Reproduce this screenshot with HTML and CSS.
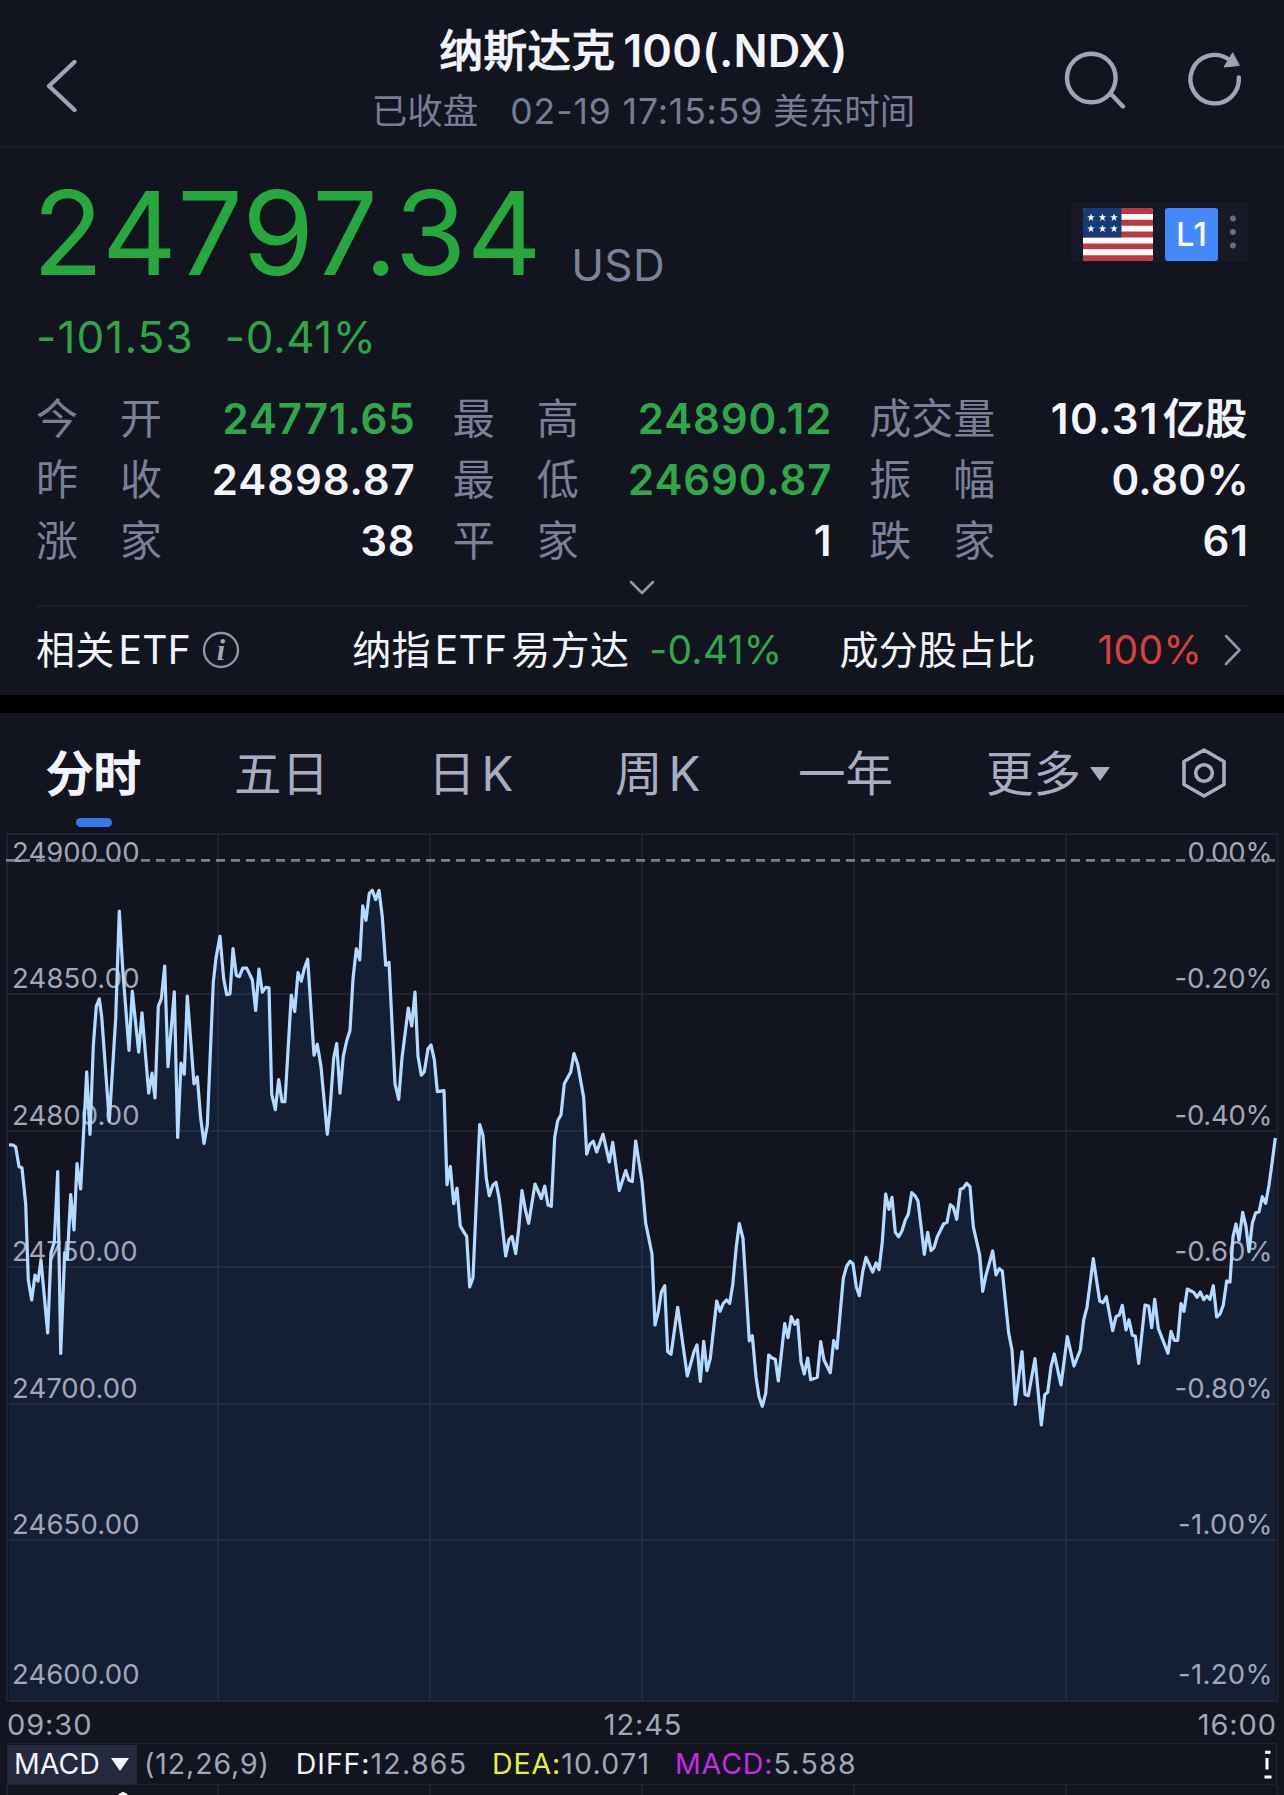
FILE: index.html
```html
<!DOCTYPE html>
<html lang="zh-CN">
<head>
<meta charset="utf-8">
<title>纳斯达克100(.NDX)</title>
<link rel="stylesheet" href="styles.css">
</head>
<body>
<header class="topbar">
  <svg class="back" width="36" height="56" viewBox="0 0 36 56"><path d="M31.500 4 6 28l25.500 24" /></svg>
  <div class="heading">
    <h1 class="title">纳斯达克<span class="title-code">100(.NDX)</span></h1>
    <p class="subtitle"><span class="sub-cjk">已收盘</span><span class="sub-time">02-19 17:15:59</span><span class="sub-cjk">美东时间</span></p>
  </div>
  <div class="actions">
    <svg width="64" height="60" viewBox="0 0 64 60"><circle cx="29.300" cy="29" r="24.300" /><path d="M48.500 44.500 61 57.500" /></svg>
    <svg width="60" height="60" viewBox="0 0 60 60"><path d="M54.800 28.500A24.200 24.200 0 1 1 44.500 10.300" /><path class="solid" d="M48.500 4 40 18l15-1.500z" /></svg>
  </div>
</header>

<section class="quote">
  <div class="price-row">
    <span class="price">24797.34</span>
    <span class="currency">USD</span>
    <div class="badges">
      <svg class="flag" width="70" height="53" viewBox="0 0 70 53">
        <defs><clipPath id="flag-shape"><rect width="70" height="53" rx="3" /></clipPath>
        <path id="star" d="M0-4 1-1.200 3.800-1.200 1.500.6 2.400 3.400 0 1.700-2.400 3.400-1.500.6-3.800-1.200-1-1.200z" /></defs>
        <g clip-path="url(#flag-shape)">
          <rect width="70" height="53" fill="#fff" />
          <path fill="#bd3843" d="M0 0h70v5.900H0zM0 11.800h70v5.900H0zM0 23.600h70v5.900H0zM0 35.400h70v5.900H0zM0 47.200h70v6H0z" />
          <rect width="38.500" height="29.500" fill="#153a78" />
          <g fill="#fff"><use href="#star" x="8" y="9.500" /><use href="#star" x="19.500" y="9.500" /><use href="#star" x="31" y="9.500" /><use href="#star" x="8" y="20.700" /><use href="#star" x="19.500" y="20.700" /><use href="#star" x="31" y="20.700" /></g>
        </g>
      </svg>
      <span class="level">L1</span>
      <svg class="dots" width="6" height="34" viewBox="0 0 6 34"><circle cx="3" cy="3.500" r="2.900" /><circle cx="3" cy="17" r="2.900" /><circle cx="3" cy="30.500" r="2.900" /></svg>
    </div>
  </div>
  <div class="change"><span class="change-abs">-101.53</span><span class="change-pct">-0.41%</span></div>

  <dl class="stats">
    <div><dt>今 开</dt><dd class="down">24771.65</dd></div>
    <div><dt>最 高</dt><dd class="down">24890.12</dd></div>
    <div><dt>成 交 量</dt><dd class="vol">10.31<span>亿股</span></dd></div>
    <div><dt>昨 收</dt><dd>24898.87</dd></div>
    <div><dt>最 低</dt><dd class="down">24690.87</dd></div>
    <div><dt>振 幅</dt><dd class="tight">0.80%</dd></div>
    <div><dt>涨 家</dt><dd>38</dd></div>
    <div><dt>平 家</dt><dd>1</dd></div>
    <div><dt>跌 家</dt><dd>61</dd></div>
  </dl>
  <div class="expand"><svg width="28" height="18" viewBox="0 0 28 18"><path d="M3 3l11 11L25 3" /></svg></div>

  <div class="etf">
    <span class="etf-label">相关<span class="latin">ETF</span></span>
    <svg class="info" width="38" height="38" viewBox="0 0 38 38"><circle cx="19" cy="19" r="17" /><text x="19" y="29" text-anchor="middle">i</text></svg>
    <span class="etf-name">纳指<span class="latin">ETF</span>易方达</span>
    <span class="etf-pct down">-0.41%</span>
    <span class="etf-share">成分股占比</span>
    <span class="etf-full">100%</span>
    <svg class="more" width="20" height="34" viewBox="0 0 20 34"><path d="M3 3l13.500 14L3 31" /></svg>
  </div>
</section>

<nav class="tabs">
  <span class="tab active">分时</span>
  <span class="tab">五日</span>
  <span class="tab">日<span class="k">K</span></span>
  <span class="tab">周<span class="k">K</span></span>
  <span class="tab">一年</span>
  <span class="tab">更多<svg class="caret" width="20" height="14" viewBox="0 0 20 14"><path d="M0 0h20L10 14z" /></svg></span>
  <svg class="hex" width="46" height="52" viewBox="0 0 46 52"><path d="M23 3 43 14.500v23L23 49 3 37.500v-23z" /><circle cx="23" cy="26" r="8.300" /></svg>
</nav>

<main>
<svg class="chart" width="1284" height="869" viewBox="0 833 1284 869">
  <polygon class="area" id="area" />
  <path class="grid" d="M7 834H1277.500V1701H7zM218 834V1701M430 834V1701M642 834V1701M854 834V1701M1066 834V1701M7 994H1277M7 1131H1277M7 1267H1277M7 1404H1277M7 1540H1277" />
  <g class="axis">
    <text x="12" y="862" textLength="127.500">24900.00</text>
    <text x="12" y="988" textLength="127.500">24850.00</text>
    <text x="12" y="1125" textLength="127.500">24800.00</text>
    <text x="12" y="1261" textLength="125.500">24750.00</text>
    <text x="12" y="1397.500" textLength="125.500">24700.00</text>
    <text x="12" y="1534" textLength="127.500">24650.00</text>
    <text x="12" y="1684" textLength="127.500">24600.00</text>
    <text x="1187.500" y="862" textLength="85">0.00%</text>
    <text x="1174.500" y="988" textLength="98">-0.20%</text>
    <text x="1174.500" y="1125" textLength="98">-0.40%</text>
    <text x="1174.500" y="1261" textLength="98">-0.60%</text>
    <text x="1174.500" y="1397.500" textLength="98">-0.80%</text>
    <text x="1178" y="1534" textLength="94.500">-1.00%</text>
    <text x="1178" y="1684" textLength="94.500">-1.20%</text>
  </g>
  <path class="base" d="M6 860.300H1277" />
  <polyline class="line" id="line" />
</svg>

<div class="times"><span>09:30</span><span class="noon">12:45</span><span>16:00</span></div>

<div class="macd">
  <span class="picker">MACD<svg width="18" height="13" viewBox="0 0 18 13"><path d="M0 0h18L9 13z" /></svg></span>
  <span class="params">(12,26,9)</span>
  <span class="diff"><b>DIFF:</b>12.865</span>
  <span class="dea"><b>DEA:</b>10.071</span>
  <span class="hist"><b>MACD:</b>5.588</span>
  <svg class="mark" width="9" height="30" viewBox="0 0 9 30"><path d="M2 3.200H7.500M4 9V20.500M1.500 28H8.500" /></svg>
</div>
<svg class="macd-chart" width="1284" height="10" viewBox="0 0 1284 10"><path class="grid" d="M7 0V10M218 0V10M430 0V10M642 0V10M854 0V10M1066 0V10M1277.500 0V10" /><path class="peak" d="M119 10.500 123 8.500 127 10.500" /></svg>
</main>
<script src="chart.js"></script>
</body>
</html>
```
FILE: chart.js
```js
// Intraday trend, as x y pairs in the chart's own coordinates.
const trend = `9 1144.8 13 1145 15.7 1147 19 1166.5 22 1168 25.7 1204 28.3 1280 31.7 1300 35 1275 38 1281 41 1260.5 47.7 1333
51 1252.5 54.3 1242 57.7 1171.6 60.7 1353.5 64.7 1252.6 67.3 1259.4 70.7 1194.7 74 1230 77 1163.7 80.7 1188.9 86.7 1071.8 90 1134.5
93.3 1046 96.3 1006.3 99.3 998.8 101.7 1016.7 109.3 1121 115.7 1018.4 119.3 911 122.7 968.5 129 1050.4 132.3 991.2 138.7 1052.1
142 1012.9 148.7 1093.1 152 1073.2 155 1098 158.3 1006.3 161.3 998.8 164.7 966.1 168 1066.6 174.3 991.9 177.7 1137.5 181 1063.2
184.3 1074.2 187.3 996 194 1083.8 197.3 1077 200.7 1118.3 204 1143.4 207.3 1125.2 213.3 982.2 216 958 220 936.4 223.7 978.8
226.7 994.6 230 994 233 948.5 236.3 975.4 239.3 976.7 242.7 968.1 246.7 968.1 252.3 979.8 255.7 1010.5 259 969.2 262.3 992.2
265.7 987.4 269 987.8 271.7 1094.2 275.3 1109.7 278.7 1079.7 282 1101.7 285 1101.7 291.3 995 294.7 1011.5 298 972.6 301.3 981.2
304.3 968.5 307.7 959.2 314 1055.2 317.3 1044.2 321 1066.6 327.3 1134.4 330 1109.7 333.7 1058 336.7 1043.5 340 1093.1 343.3 1056.3
346.7 1040.8 350 1030.5 353 978.8 356.3 948.8 359.7 959.9 362.7 905.8 366 920.3 369.3 893.4 372.3 890.3 375.7 899.6 379 890.3
382.3 916.8 385.7 965.4 389 962.3 395 1083.8 398.7 1099.3 402 1058 408.3 1008.1 411.7 1026 415 992.2 418 1056.3 421.3 1075.2
424.3 1071.8 428 1048.7 431 1044.9 434.3 1059.7 437.3 1091.7 444 1090.7 447 1184.7 450.3 1166.5 453.7 1203.7 457 1188.2 460.3 1226
463.7 1231.9 466.7 1236.4 469.7 1287 473 1277.7 479.7 1124.5 483 1135.5 486.3 1178.5 489.3 1195.7 492.7 1185.4 496 1182.3
499.3 1199.2 505.7 1256 509 1239.8 512 1236.4 515.7 1253.6 518.7 1228.5 522 1190.6 525.3 1209.5 528.7 1223.3 535 1184 541.3 1198.5
544.7 1186.1 548 1205 551.3 1206.4 554.7 1137.2 557.7 1120.7 561 1114.8 564.3 1083.8 570.7 1072.1 574 1053.5 577.7 1064.2
583.7 1097.6 586.7 1154.1 590 1144.1 593.3 1141.3 596.7 1152 603 1134.1 609.3 1162 612.7 1142.4 619.3 1190.6 625.7 1170.6
629 1180.2 632.3 1181.6 635.7 1141 642 1181.7 645.7 1223.3 652 1254 655 1325 658.3 1311.7 661.3 1292 664.7 1285.7 667.7 1351.7
671 1354.3 677.7 1307.3 687.3 1376 694 1351.7 697 1345 700.3 1381.3 703.7 1341.3 707 1370.7 710.3 1358.3 716.7 1301 720 1311.3
723.3 1303.3 726.7 1300 729.7 1303.3 732.7 1285 736.3 1246.7 739.3 1223.7 743 1238.3 749.3 1341 752.3 1335.7 756 1376.7 759 1396.7
762.3 1406.3 765.7 1393.3 768.7 1355 772 1358 775.3 1359.3 778.3 1381 784.7 1323.7 788 1337.7 791.3 1316.7 794.7 1324.3 797.7 1320
801 1361.7 804.3 1374 807.7 1358 810.7 1379.7 817.3 1377.3 820.7 1341.7 824 1360 830.3 1372.7 833.7 1340.7 837 1348.3 843.3 1278.3
846.7 1266 850 1261.3 853 1263.7 856.3 1286.7 859.3 1295.7 862.7 1271.7 866 1257.3 872.7 1272 876 1263 879 1269.7 882.3 1241.7
885.7 1194 889 1209.3 892 1197.3 895.3 1232.3 898.7 1236.7 902 1230.7 905.3 1220 908.3 1214.3 911.7 1192.7 915 1195.7 918 1201
921.3 1228.3 924.3 1254.3 927.7 1232.3 931 1250.7 934 1247.7 937.3 1236.7 943.7 1223.7 947 1222.3 950.3 1204.7 953.3 1207.3
956.7 1219.3 960.3 1189.3 963.3 1188 966.7 1183.3 970 1186.7 973.3 1226.7 979.7 1255 982.7 1291.3 986 1275 992.7 1251 996 1275
999.3 1268.7 1002.3 1271 1008.7 1333.3 1012 1350 1015.3 1404.3 1022 1351.7 1025 1394.3 1028.3 1395.7 1035 1358.7 1041.3 1425
1044.7 1394.7 1047.7 1392.3 1051 1366.7 1054.3 1354 1061 1385 1067.3 1336.7 1074 1366 1080.3 1350 1083.7 1320 1087 1307.3
1093.3 1258.7 1099.7 1301 1103 1302.7 1106.3 1296.7 1112.7 1330.7 1116 1316.7 1119.3 1315 1122.3 1305.3 1126 1330 1129 1319.7
1132.3 1335.3 1135.3 1336 1138.7 1363.3 1145 1305 1148.7 1306 1151.7 1327.7 1154.7 1299.3 1158.3 1328.3 1168 1353.3 1171 1331.3
1174.3 1340.3 1177.7 1340.3 1181 1303.7 1184 1311.3 1187.3 1289 1194 1292.7 1197 1297.3 1200.3 1292 1203.7 1299.7 1206.7 1296
1210 1299.3 1213.3 1285.7 1216.7 1317 1220 1314 1223.3 1305 1226.7 1281 1230 1282 1233 1236.7 1236 1224 1239 1240 1242.7 1212.3
1246 1226.7 1249 1251.7 1252.3 1223.3 1255.7 1212.7 1259 1212 1262.3 1196.7 1265.7 1203.3 1269 1185 1272 1163.3 1275.3 1138`;

document.getElementById("line").setAttribute("points", trend);
document.getElementById("area").setAttribute("points", `9 1701 ${trend} 1275.3 1701`);
```
FILE: styles.css
```css
* { box-sizing: border-box; }
body {
  margin: 0;
  width: 1284px;
  height: 1795px;
  overflow: hidden;
  background: #12151f;
  color: #f3f4fa;
  font-family: Inter, "Noto Sans CJK SC", sans-serif;
  font-feature-settings: "calt" 0;
  white-space: nowrap;
}
h1, p, dl, dt, dd { margin: 0; }
svg { display: block; flex: none; fill: none; }

.topbar {
  display: grid;
  grid-template-columns: 1fr auto 1fr;
  height: 148px;
  padding: 20px 40px 0 43px;
  border-bottom: 2px solid #1a1e28;
}
.topbar svg { stroke: #9fa4b8; stroke-width: 4.4; stroke-linecap: round; stroke-linejoin: round; }
.topbar svg .solid { fill: #9fa4b8; stroke-width: 1; }
.back { margin-top: 38px; }
.heading { text-align: center; }
.title { font-size: 44px; line-height: 62px; font-weight: 500; -webkit-text-stroke: 0.7px #f3f4fa; }
.title-code { margin-left: 8px; font-size: 45px; font-weight: 600; letter-spacing: 0.15px; -webkit-text-stroke: 0; }
.subtitle { display: flex; justify-content: center; margin-top: 10px; font-size: 35.500px; line-height: 40px; color: #777d93; }
.sub-time { margin: 0 10px 0 32px; letter-spacing: 0.9px; }
.actions { display: flex; justify-content: flex-end; gap: 58px; margin-top: 29px; }

.quote { height: 547px; padding: 26px 36px 0; }
.price-row { display: flex; height: 118px; }
.price { margin-left: -3.500px; font-size: 116px; line-height: 118px; color: #27a83d; letter-spacing: 0.45px; }
.currency { margin: 64px 0 0 29px; font-size: 44px; line-height: 54px; color: #7c8298; letter-spacing: 0.4px; }
.badges {
  display: flex; align-items: center; gap: 12px;
  width: 177px; height: 60px; margin: 28px 0 0 auto; padding: 4px 0 0 12px;
  background: #161a26;
}
.dots { margin-top: -4px; fill: #6b6f80; }
.level { width: 53px; border-radius: 3px; background: #4389fb; color: #fff; font-size: 33px; line-height: 53px; text-align: center; font-weight: 500; }
.change { display: flex; gap: 31px; margin-top: 20px; font-size: 44px; line-height: 50px; color: #2fa646; }
.change-abs { letter-spacing: 1.15px; }
.change-pct { letter-spacing: 0.6px; }
.down { color: #2fa84a; }

.stats { display: grid; grid-template-columns: repeat(3, 1fr); column-gap: 38px; margin-top: 26px; }
.stats div { display: flex; justify-content: space-between; line-height: 61px; }
.stats dt { width: 126px; font-size: 42px; color: #7a8096; text-align: justify; text-align-last: justify; word-spacing: -12px; }
.stats dd { margin-right: -1px; font-size: 42px; font-weight: 600; letter-spacing: 0.9px; }
.stats .vol { margin-right: 1px; letter-spacing: 1.4px; }
.stats .tight { letter-spacing: 0.4px; }
.vol span { margin-left: 4px; font-weight: 500; letter-spacing: 0; -webkit-text-stroke: 0.7px #f3f4fa; }
.expand { display: flex; justify-content: center; height: 36px; padding-top: 8px; border-bottom: 2px solid #1a1e28; }
.expand svg, .more { stroke: #9297aa; stroke-width: 2.6; stroke-linecap: round; stroke-linejoin: round; }

.etf { display: flex; align-items: center; height: 86px; font-size: 39px; line-height: 60px; letter-spacing: 0.3px; }
.etf .latin { margin: 0 4px; }
.info { margin-left: 7px; }
.info circle { stroke: #8f94a8; stroke-width: 2.4; }
.info text { fill: #a3a8b8; font: italic bold 30px "Liberation Serif", serif; }
.etf-name { margin-left: 112px; }
.etf-pct { margin-left: 20px; }
.etf-share { margin-left: 57px; }
.etf-full { margin-left: auto; color: #d8403c; }
.more { margin: 0 5px 0 21px; }

.tabs {
  display: grid;
  grid-template-columns: 188px 194px 187px 183px 188px 195px auto;
  height: 138px; padding: 31px 0 0 46px;
  border-top: 18px solid #000;
  color: #a8adc0; font-size: 47.500px; line-height: 60px;
}
.tab { display: flex; align-items: center; height: 60px; }
.tab .k { margin-left: 6px; }
.active { position: relative; color: #f3f4fa; font-weight: 500; -webkit-text-stroke: 1.3px #f3f4fa; }
.active::after { content: ""; position: absolute; left: 30px; top: 74px; width: 36px; height: 9px; border-radius: 4.500px; background: #3577e3; }
.caret { margin-left: 9px; fill: #a8adc0; }
.hex { margin-top: 3px; stroke: #a8adc0; stroke-width: 3.600; stroke-linejoin: round; }

.grid { stroke: #8b96b8; stroke-opacity: .11; stroke-width: 2; }
.area { fill: #151f33; }
.axis { fill: #a2a7b8; font-size: 27.500px; }
.base { stroke: #7a7f90; stroke-width: 2.8; stroke-dasharray: 9 6; }
.line { stroke: #b4daff; stroke-width: 3.2; stroke-linejoin: round; }

.times { display: flex; justify-content: space-between; height: 41px; padding: 2px 7px 0; font-size: 29px; line-height: 42px; letter-spacing: 0.9px; color: #a2a7b5; }
.noon { margin-right: 4px; }
.macd { display: flex; align-items: center; height: 42px; margin: 0 7px; border: 1.500px solid #1f2430; font-size: 28.500px; line-height: 40px; letter-spacing: 1.3px; color: #a2a7b5; }
.macd b { font-weight: 400; letter-spacing: 0.9px; }
.picker { display: flex; align-items: center; gap: 11px; width: 129px; height: 39px; padding-left: 6px; background: #232a3e; color: #f3f4fa; letter-spacing: 0; }
.picker svg { fill: #f3f4fa; }
.params { margin-left: 7px; letter-spacing: 0.9px; }
.diff { margin-left: 26px; }
.diff b { color: #f3f4fa; }
.dea { margin-left: 24.500px; }
.dea b { color: #e6f03c; }
.hist { margin-left: 24.500px; }
.hist b { color: #c42ee0; }
.mark { margin: 0 4px 0 auto; stroke: #fff; stroke-width: 3; }
.peak { stroke: #fff; stroke-width: 3; }
```
